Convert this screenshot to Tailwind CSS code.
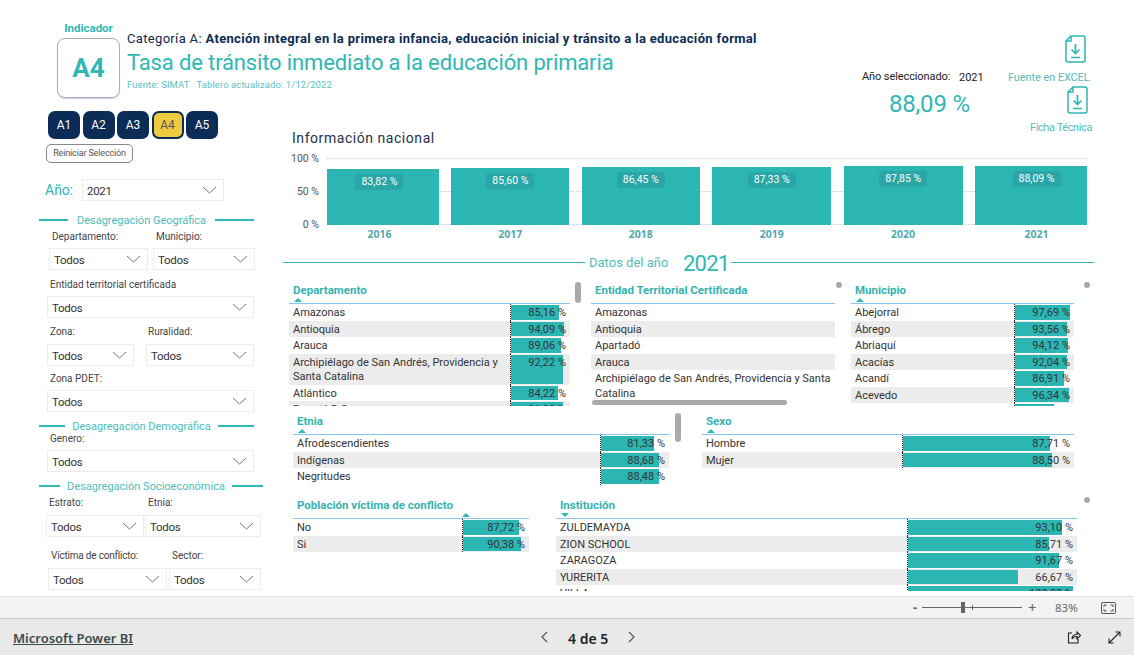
<!DOCTYPE html>
<html lang="es">
<head>
    <meta charset="UTF-8">
    <title>Tasa de tránsito inmediato a la educación primaria</title>
    <script src="https://cdn.jsdelivr.net/npm/@tailwindcss/browser@4"></script>
</head>
<body class="w-[1134px] h-[655px] overflow-hidden bg-white font-['Noto_Sans',sans-serif] text-[#333]">
    <div class="h-[596px] overflow-hidden">
        <!-- encabezado -->
        <header class="h-[100px] flex items-start font-['Roboto',sans-serif]">
            <div class="ml-[57px] w-[63px] mt-[21px]">
                <div class="h-[14px] leading-[14px] text-center text-[11.500px] font-bold text-[#2fb7b4]">Indicador</div>
                <div class="mt-[3px] h-[60px] border border-[#a3b0c2] rounded-[8px] flex items-center justify-center text-[26px] font-bold text-[#2fb7b4] shadow-[0_1px_1px_#ccd]">A4</div>
            </div>
            <div class="ml-[7px] w-[660px] mt-[30px]">
                <div class="h-[17px] leading-[17px] text-[13px] text-[#10294d] tracking-[0.33px] whitespace-nowrap">Categoría A: <b class="font-bold text-[#0a2c56]">Atención integral en la primera infancia, educación inicial y tránsito a la educación formal</b></div>
                <div class="mt-[1px] h-[29px] leading-[29px] text-[22px] text-[#2fb7b4] tracking-[-0.14px] whitespace-nowrap">Tasa de tránsito inmediato a la educación primaria</div>
                <div class="mt-[2px] h-[12px] leading-[12px] text-[9.5px] text-[#5cbfbd] tracking-[0.09px] whitespace-nowrap">Fuente: SIMAT &nbsp; Tablero actualizado: 1/12/2022</div>
            </div>
            <div class="ml-[75px] w-[130px] mt-[69px]">
                <div class="flex h-[16px] items-center text-[11px] text-[#222] whitespace-nowrap"><span class="w-[97px] tracking-[-0.1px]">Año seleccionado:</span><span class="mt-[2px]">2021</span></div>
                <div class="mt-[5px] ml-[27px] text-[24px] leading-[28px] text-[#2fb7b4] tracking-[-0.2px] whitespace-nowrap">88,09 %</div>
            </div>
            <div class="ml-[16px] w-[90px] mt-[35px] flex flex-col text-[11px] text-[#55bcb9]">
                <svg class="ml-[57px] w-[21px] h-[28px]" viewBox="0 0 21 28" fill="none" stroke="#2fb7b4" stroke-width="1.5"><path d="M6 1h12a2 2 0 0 1 2 2v22a2 2 0 0 1-2 2H3a2 2 0 0 1-2-2V6z"/><path d="M6 1v5H1"/><path d="M10.500 9v9M6.500 14.500l4 4 4-4M6 22.500h9" stroke-width="1.7"/></svg>
                <div class="h-[14px] leading-[14px] mt-[8px] tracking-[-0.1px] whitespace-nowrap">Fuente en EXCEL</div>
                <svg class="ml-[59px] mt-[1px] w-[21px] h-[28px]" viewBox="0 0 21 28" fill="none" stroke="#2fb7b4" stroke-width="1.5"><path d="M6 1h12a2 2 0 0 1 2 2v22a2 2 0 0 1-2 2H3a2 2 0 0 1-2-2V6z"/><path d="M6 1v5H1"/><path d="M10.500 9v9M6.500 14.500l4 4 4-4M6 22.500h9" stroke-width="1.7"/></svg>
                <div class="h-[14px] leading-[14px] mt-[7px] ml-[22px] tracking-[-0.4px] whitespace-nowrap">Ficha Técnica</div>
            </div>
        </header>

        <div class="flex h-[496px]">
            <!-- filtros -->
            <aside class="w-[283px] shrink-0 font-['Roboto',sans-serif] text-[10px] text-[#444]">
                <div class="mt-[11px] ml-[48px] flex gap-[2.5px] h-[28px] text-[12px]">
                    <div class="w-[32px] rounded-[7px] bg-[#0a2c56] text-white flex items-center justify-center">A1</div>
                    <div class="w-[32px] rounded-[7px] bg-[#0a2c56] text-white flex items-center justify-center">A2</div>
                    <div class="w-[32px] rounded-[7px] bg-[#0a2c56] text-white flex items-center justify-center">A3</div>
                    <div class="w-[32px] rounded-[7px] bg-[#eccb3f] border-2 border-[#0a2c56] text-[#555] flex items-center justify-center">A4</div>
                    <div class="w-[32px] rounded-[7px] bg-[#0a2c56] text-white flex items-center justify-center">A5</div>
                </div>
                <div class="mt-[5px] ml-[46px] w-[87px] h-[19px] border border-[#888] rounded-[5px] flex items-center justify-center text-[9px] tracking-[-0.15px] text-[#555]">Reiniciar Selección</div>

                <div class="mt-[16px] ml-[45px] flex h-[22px] items-center">
                    <span class="w-[37px] text-[14px] text-[#2fb7b4]">Año:</span>
                    <div data-dd="2021" class="w-[142px] h-[22px]"></div>
                </div>

                <div class="mt-[12px] ml-[39px] w-[215px] h-[14px] flex items-center text-[11px] text-[#4dbdba] whitespace-nowrap">
                    <i class="block w-[29px] h-[2px] bg-[#2fb7b4]"></i><span class="flex-1 text-center pt-[2px]">Desagregación Geográfica</span><i class="block w-[39px] h-[2px] bg-[#2fb7b4]"></i>
                </div>
                <div class="mt-[3px] h-[14px] leading-[14px] flex pl-[52px]"><span class="w-[104px]">Departamento:</span><span>Municipio:</span></div>
                <div class="mt-[4px] ml-[49px] flex gap-[5px] h-[22px]"><div data-dd class="w-[99px]"></div><div data-dd class="w-[102px]"></div></div>
                <div class="mt-[8px] h-[14px] leading-[14px] pl-[50px]">Entidad territorial certificada</div>
                <div data-dd class="mt-[4px] ml-[47px] w-[207px] h-[22px]"></div>
                <div class="mt-[7px] h-[14px] leading-[14px] flex pl-[50px]"><span class="w-[98px]">Zona:</span><span>Ruralidad:</span></div>
                <div class="mt-[5px] ml-[47px] flex gap-[12px] h-[22px]"><div data-dd class="w-[87px]"></div><div data-dd class="w-[108px]"></div></div>
                <div class="mt-[6px] h-[14px] leading-[14px] pl-[50px]">Zona PDET:</div>
                <div data-dd class="mt-[4px] ml-[47px] w-[207px] h-[22px]"></div>

                <div class="mt-[7px] ml-[39px] w-[215px] h-[14px] flex items-center text-[11px] text-[#4dbdba] whitespace-nowrap">
                    <i class="block w-[26px] h-[2px] bg-[#2fb7b4]"></i><span class="flex-1 text-center pt-[2px]">Desagregación Demográfica</span><i class="block w-[36px] h-[2px] bg-[#2fb7b4]"></i>
                </div>
                <div class="mt-[-1px] h-[14px] leading-[14px] pl-[50px]">Genero:</div>
                <div data-dd class="mt-[4px] ml-[47px] w-[207px] h-[22px]"></div>

                <div class="mt-[7px] ml-[39px] w-[224px] h-[14px] flex items-center text-[11px] text-[#4dbdba] whitespace-nowrap">
                    <i class="block w-[21px] h-[2px] bg-[#2fb7b4]"></i><span class="flex-1 text-center pt-[2px]">Desagregación Socioeconómica</span><i class="block w-[31px] h-[2px] bg-[#2fb7b4]"></i>
                </div>
                <div class="mt-[3px] h-[14px] leading-[14px] flex pl-[49px]"><span class="w-[99px]">Estrato:</span><span>Etnia:</span></div>
                <div class="mt-[5px] ml-[46px] flex gap-[1px] h-[22px]"><div data-dd class="w-[98px]"></div><div data-dd class="w-[116px]"></div></div>
                <div class="mt-[12px] h-[14px] leading-[14px] flex pl-[51px]"><span class="w-[121px] tracking-[-0.2px]">Víctima de conflicto:</span><span>Sector:</span></div>
                <div class="mt-[5px] ml-[48px] flex gap-[2px] h-[22px]"><div data-dd class="w-[119px]"></div><div data-dd class="w-[92px]"></div></div>
            </aside>

            <main class="flex-1 min-w-0">
                <!-- información nacional -->
                <div class="mt-[30px] ml-[9px] h-[16px] leading-[16px] text-[14px] font-['Roboto',sans-serif] text-[#24324a] tracking-[0.55px]">Información nacional</div>
                <div class="relative mt-[12px] ml-[44px] w-[760px] h-[67px] font-['Roboto',sans-serif]">
                    <div class="absolute left-0 right-0 top-0 border-t border-dotted border-[#ccc]"></div>
                    <div class="absolute left-0 right-0 top-[33px] border-t border-dotted border-[#ccc]"></div>
                    <div class="absolute left-0 right-0 top-[66px] border-t border-dotted border-[#ccc]"></div>
                    <div class="absolute left-[-44px] w-[36px] top-[-6px] text-right text-[10.5px] leading-[14px] text-[#555]">100 %</div>
                    <div class="absolute left-[-44px] w-[36px] top-[27px] text-right text-[10.5px] leading-[14px] text-[#555]">50 %</div>
                    <div class="absolute left-[-44px] w-[36px] top-[60px] text-right text-[10.5px] leading-[14px] text-[#555]">0 %</div>
                    <div id="bars" class="relative h-full flex items-end gap-[12.6px]"></div>
                </div>
                <div id="years" class="mt-[2px] ml-[44px] w-[760px] h-[14px] flex gap-[12.6px] text-[10.5px] leading-[14px] font-bold text-[#55a9ac] text-center"></div>

                <!-- datos del año -->
                <div class="mt-[9px] h-[25px] flex items-center font-['Roboto',sans-serif] text-[#2fb7b4]">
                    <i class="block w-[302px] h-[1.5px] bg-[#2fb7b4]"></i>
                    <span class="ml-[4px] w-[94px] text-[13px] text-[#55bcb9] whitespace-nowrap">Datos del año</span>
                    <span class="text-[22px] w-[48px] mt-[2px] tracking-[-0.8px]">2021</span>
                    <i class="block w-[363px] h-[1.5px] bg-[#2fb7b4]"></i>
                </div>

                <!-- tablas -->
                <div class="mt-[7px] h-[124px] flex overflow-hidden">
                    <div id="t-departamento" class="relative ml-[6px] w-[281px] shrink-0"></div>
                    <div id="t-entidad" class="relative ml-[21px] w-[244px] shrink-0"></div>
                    <div id="t-municipio" class="relative ml-[16px] w-[223px] shrink-0"></div>
                </div>
                <div class="mt-[7px] h-[84px] flex">
                    <div id="t-etnia" class="relative ml-[10px] w-[376px] shrink-0"></div>
                    <div id="t-sexo" class="relative ml-[33px] w-[372px] shrink-0"></div>
                </div>
                <div class="h-[94px] flex overflow-hidden">
                    <div id="t-victima" class="relative ml-[10px] w-[236px] shrink-0"></div>
                    <div id="t-institucion" class="relative ml-[27px] w-[521px] shrink-0"></div>
                </div>
            </main>
        </div>
    </div>

    <!-- barra de zoom -->
    <div class="h-[22px] bg-[#f3f3f3] border-t border-[#e0e0e0] flex items-center text-[#666]">
        <span class="ml-[913px] w-[6px] text-[13px] font-bold leading-none">-</span>
        <div class="relative ml-[3px] w-[100px] h-[1px] bg-[#666]">
            <i class="absolute left-[39px] top-[-5px] w-[4px] h-[11px] bg-[#666]"></i>
            <i class="absolute left-[50px] top-[-2px] w-[1px] h-[5px] bg-[#666]"></i>
        </div>
        <span class="ml-[6px] w-[8px] text-[15px] leading-none">+</span>
        <span class="ml-[19px] w-[24px] text-[11.5px]">83%</span>
        <svg class="ml-[22px] w-[15px] h-[12px]" viewBox="0 0 15 12" fill="none" stroke="#555"><rect x=".5" y=".5" width="14" height="11" rx="1.5"/><path d="M3 5V3h2.500M12 5V3H9.500M3 7v2h2.500M12 7v2H9.500"/></svg>
    </div>

    <!-- pie -->
    <footer class="h-[37px] bg-[#e9e9e9] border-t border-[#c8c8c8] flex items-center">
        <a class="ml-[13px] w-[527px] mt-[3px] text-[13px] font-semibold text-[#3b4a4a] underline whitespace-nowrap">Microsoft Power BI</a>
        <svg class="w-[8px] h-[12px]" viewBox="0 0 8 12" fill="none" stroke="#555" stroke-width="1.2"><path d="M7 1 2 6l5 5"/></svg>
        <span class="ml-[20px] w-[44px] mt-[2px] text-[14px] font-semibold text-[#222] whitespace-nowrap">4 de 5</span>
        <svg class="ml-[16px] w-[8px] h-[12px]" viewBox="0 0 8 12" fill="none" stroke="#555" stroke-width="1.2"><path d="m1 1 5 5-5 5"/></svg>
        <svg class="ml-[431px] w-[14px] h-[13px]" viewBox="0 0 14 13" fill="none" stroke="#222" stroke-width="1.1"><path d="M5 2H1.500v10h9.500V8"/><path d="M5 8c0-3 2-4.500 5-4.500V1l3.500 3.500L10 8V5.500C8 5.500 6 6 5 8z"/></svg>
        <svg class="ml-[27px] w-[13px] h-[13px]" viewBox="0 0 13 13" fill="none" stroke="#222" stroke-width="1.1"><path d="M1 12 12 1M7.500 1H12v4.500M1 7.500V12h4.500"/></svg>
    </footer>

    <script>
        // desplegables de los filtros
        document.querySelectorAll('[data-dd]').forEach(el => {
            el.className += ' border border-[#ececec] bg-white flex items-center justify-between pl-[4px] pr-[6px] text-[11.5px] tracking-[-0.3px] text-[#333]';
            el.innerHTML = `<span class="mt-[3px]">${el.dataset.dd || 'Todos'}</span><svg class="w-[15px] h-[8px]" viewBox="0 0 15 8" fill="none" stroke="#777"><path d="M1 1l6.500 6L14 1"/></svg>`;
        });

        // barras del gráfico nacional: [año, valor, ancho, recorte izq., recorte der.]
        const years = [
            ['2016', 83.82, 112, 0, 7], ['2017', 85.60, 118, 0, 0], ['2018', 86.45, 118, 0, 0],
            ['2019', 87.33, 119, 0, 0], ['2020', 87.85, 119, 0, 0], ['2021', 88.09, 112, 11, 0]
        ];
        const pct = v => v.toFixed(2).replace('.', ',') + ' %';
        document.getElementById('bars').innerHTML = years.map(([y, v, w, l, r]) => `
            <div class="bg-[#2bb5b3] flex justify-center pt-[5px]" style="width:${w}px;height:${v * 0.67}px;padding-left:${l}px;padding-right:${r}px">
                <span class="h-[16px] px-[6px] rounded-[3px] bg-[#29a6a5] text-white text-[10.5px] leading-[16px] whitespace-nowrap">${pct(v)}</span>
            </div>`).join('');
        document.getElementById('years').innerHTML = years.map(([y, v, w, l, r]) => `<span style="width:${w}px;padding-left:${l}px;padding-right:${r}px">${y}</span>`).join('');

        // tablas: scale = píxeles de barra para el 100 %
        const tables = {
            'departamento': { title: 'Departamento', col: 60, scale: 56, rows: [['Amazonas', 85.16], ['Antioquia', 94.09], ['Arauca', 89.06], ['Archipiélago de San Andrés, Providencia y Santa Catalina', 92.22], ['Atlántico', 84.22], ['Bogotá D.C.', 91.98]] },
            'entidad': { title: 'Entidad Territorial Certificada', col: 0, rows: [['Amazonas'], ['Antioquia'], ['Apartadó'], ['Arauca'], ['Archipiélago de San Andrés, Providencia y Santa Catalina']] },
            'municipio': { title: 'Municipio', col: 60, scale: 56, rows: [['Abejorral', 97.69], ['Ábrego', 93.56], ['Abriaquí', 94.12], ['Acacías', 92.04], ['Acandí', 86.91], ['Acevedo', 96.34], ['', 70]] },
            'etnia': { title: 'Etnia', col: 69, scale: 65, rows: [['Afrodescendientes', 81.33], ['Indígenas', 88.68], ['Negritudes', 88.48]] },
            'sexo': { title: 'Sexo', col: 172, scale: 168, rows: [['Hombre', 87.71], ['Mujer', 88.50]] },
            'victima': { title: 'Población víctima de conflicto', col: 67, scale: 64, sortAt: 169, rows: [['No', 87.72], ['Si', 90.38]] },
            'institucion': { title: 'Institución', col: 170, scale: 165, down: true, rows: [['ZULDEMAYDA', 93.10], ['ZION SCHOOL', 85.71], ['ZARAGOZA', 91.67], ['YURERITA', 66.67], ['VILLA', 100]] }
        };

        Object.entries(tables).forEach(([id, t]) => {
            const tri = t.down
                ? 'border-t-[4px] border-t-[#2fb7b4]'
                : 'border-b-[4px] border-b-[#2fb7b4]';
            const head = `
                <div class="relative h-[22px] border-b-[1.5px] border-[#8cc4f0] font-['Roboto',sans-serif]">
                    <div class="pl-[4px] h-[16px] leading-[16px] text-[11.5px] font-bold text-[#35b3b1] whitespace-nowrap">${t.title}</div>
                    ${t.title === 'Entidad Territorial Certificada' ? '' : `<i class="absolute top-[16px] w-0 h-0 border-x-[4px] border-x-transparent ${tri}" style="left:${t.sortAt || 5}px"></i>`}
                </div>`;
            const rows = t.rows.map(([name, v], i) => `
                <div class="flex min-h-[16.5px] font-['Roboto',sans-serif] ${i % 2 ? 'bg-[#ececec]' : 'bg-white'}">
                    <div class="flex-1 min-w-0 pl-[4px] pr-[2px] pt-[2px] text-[11px] leading-[14.5px] text-[#333]">${name}</div>
                    ${t.col ? `
                    <div class="relative shrink-0 border-l border-dotted border-[#222] text-right pr-[4px] pt-[2px] text-[11px] leading-[14.5px] text-[#333]" style="width:${t.col}px">
                        <i class="absolute left-0 top-[1px] bottom-[1px] bg-[#2bb5b3]" style="width:${v * t.scale / 100}px"></i>
                        ${name ? `<span class="relative">${pct(v)}</span>` : ''}
                    </div>` : ''}
                </div>`).join('');
            document.getElementById('t-' + id).innerHTML = head + rows;
        });

        // barras de desplazamiento y puntos sobre las tablas
        const over = {
            'departamento': '<i class="absolute left-[286px] top-0 w-[6px] h-[21px] rounded-full bg-[#aaa]"></i>',
            'entidad': '<i class="absolute left-[1px] top-[118px] w-[195px] h-[5px] rounded-full bg-[#aaa]"></i><i class="absolute left-[245px] top-[0px] w-[6px] h-[6px] rounded-full bg-[#aaa]"></i>',
            'municipio': '<i class="absolute left-[233px] top-[0px] w-[6px] h-[6px] rounded-full bg-[#aaa]"></i>',
            'etnia': '<i class="absolute left-[382px] top-0 w-[6px] h-[29px] rounded-full bg-[#aaa]"></i>',
            'institucion': '<i class="absolute left-[528px] top-0 w-[6px] h-[6px] rounded-full bg-[#aaa]"></i>'
        };
        Object.entries(over).forEach(([id, html]) => document.getElementById('t-' + id).insertAdjacentHTML('beforeend', html));
    </script>
</body>
</html>
